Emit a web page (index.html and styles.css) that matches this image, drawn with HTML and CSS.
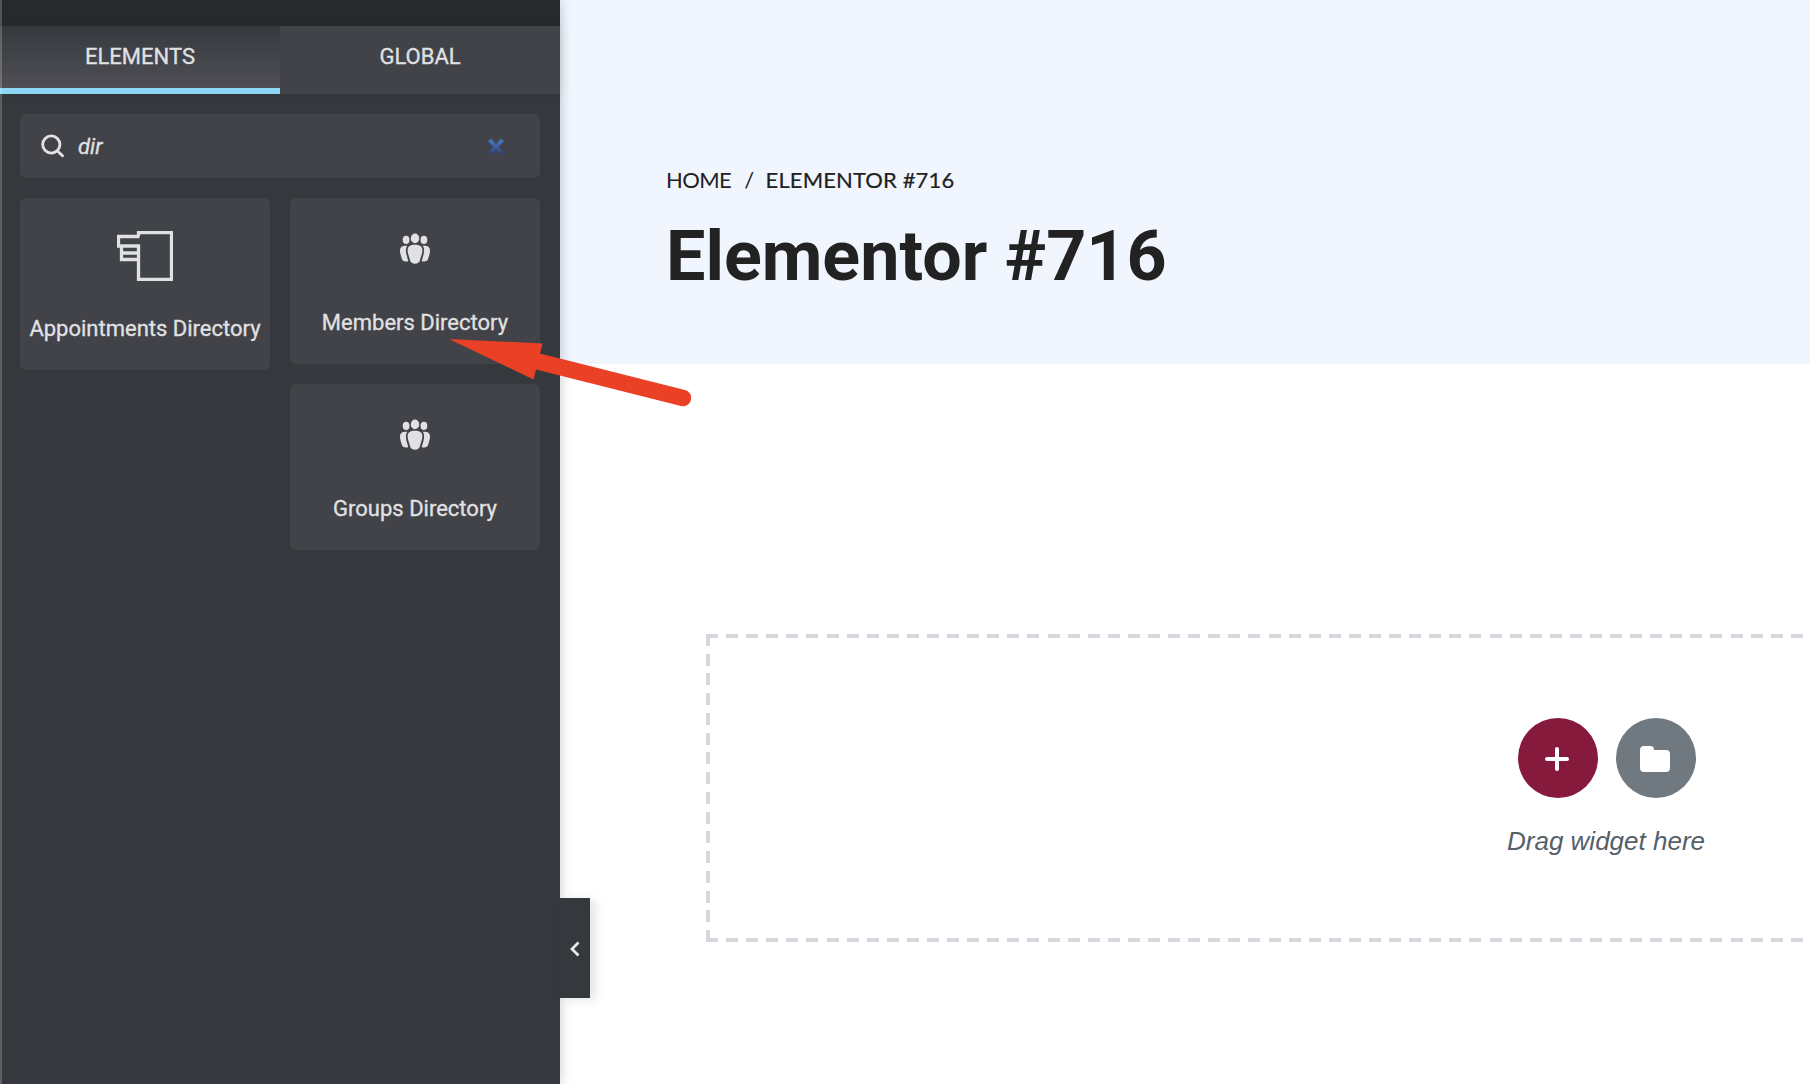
FILE: index.html
```html
<!DOCTYPE html>
<html lang="en">
<head>
<meta charset="utf-8">
<title>Elementor #716</title>
<link rel="stylesheet" href="styles.css">
</head>
<body>
<svg class="symbols" aria-hidden="true">
  <symbol id="people" viewBox="0 0 30 30">
    <ellipse cx="6.1" cy="6.4" rx="3.4" ry="4.1"/>
    <ellipse cx="23.9" cy="6.4" rx="3.4" ry="4.1"/>
    <ellipse cx="15" cy="4.9" rx="4.2" ry="4.9"/>
    <path d="M15 11.2c4.5 0 7.400 1.500 7.400 5.500 0 3.500-1.700 6.500-2.400 9.800C19.400 29 17.600 30.200 15 30.200s-4.400-1.200-5-3.700c-.7-3.300-2.400-6.300-2.400-9.800 0-4 2.900-5.500 7.400-5.500z"/>
    <path d="M7.300 12.200C3 11.900 0 13 0 17c0 3.200 1 5.200 1.700 7.700C2.500 27.300 4 28.400 8.300 27.700 7.500 24 5.900 20.800 5.900 17c0-2 .4-3.500 1.400-4.800z"/>
    <path d="M22.700 12.200C27 11.900 30 13 30 17c0 3.200-1 5.200-1.700 7.700-.8 2.600-2.300 3.700-6.600 3 .8-3.700 2.400-6.900 2.400-10.700 0-2-.4-3.500-1.400-4.800z"/>
  </symbol>
</svg>
<div class="editor">
  <aside class="panel">
    <div class="panel-header"></div>
    <nav class="tabs">
      <div class="tab active">ELEMENTS</div>
      <div class="tab">GLOBAL</div>
    </nav>
    <div class="search">
      <svg class="search-icon" viewBox="0 0 24 24"><circle cx="10.300" cy="10.500" r="8.600"/><path d="M16.500 17l5 4.800"/></svg>
      <span class="query">dir</span>
      <svg class="clear-icon" viewBox="0 0 16 16">
        <defs><linearGradient id="blue" x1="0" y1="0" x2="0" y2="16" gradientUnits="userSpaceOnUse"><stop offset="0" stop-color="#4a7ccc"/><stop offset="1" stop-color="#2d3f73"/></linearGradient></defs>
        <path d="M1.500 1l13 14M14.500 1l-13 14"/>
      </svg>
    </div>
    <div class="widgets">
      <div class="column">
        <div class="widget tall">
          <svg class="sign-icon" viewBox="0 0 56 50"><path d="M21.500 5V1.500h33v47h-33V15h-20V5.500h21M4.500 15v13.500h17M4.500 22h17"/></svg>
          <span>Appointments Directory</span>
        </div>
      </div>
      <div class="column">
        <div class="widget">
          <svg class="people-icon"><use href="#people"/></svg>
          <span>Members Directory</span>
        </div>
        <div class="widget">
          <svg class="people-icon"><use href="#people"/></svg>
          <span>Groups Directory</span>
        </div>
      </div>
    </div>
    <div class="toggle"><svg viewBox="0 0 10 16"><path d="M8.500 1.500L2 8l6.500 6.500"/></svg></div>
  </aside>
  <main class="preview">
    <header class="banner">
      <div class="crumbs"><span class="home">HOME</span><span class="slash">/</span><span class="current">ELEMENTOR #716</span></div>
      <h1>Elementor #716</h1>
    </header>
    <section class="dropzone">
      <div class="buttons">
        <div class="round add"><svg viewBox="0 0 24 24"><path d="M12 2v20M2 12h20"/></svg></div>
        <div class="round library"><svg viewBox="0 0 30 26"><path d="M4 0h6.500q3.500 0 3.500 4h12q4 0 4 4v14q0 4-4 4H4q-4 0-4-4V4q0-4 4-4z"/></svg></div>
      </div>
      <p>Drag widget here</p>
    </section>
  </main>
  <svg class="arrow" viewBox="0 0 242 68"><path d="M0 0l93.500 4.500-2.500 10L236 51a8 8 0 0 1-4 16L87 30.500l-2.500 10z"/></svg>
</div>
</body>
</html>
```
FILE: styles.css
```css
* { box-sizing: border-box; }
body { margin: 0; background: #fff; font-family: Roboto, sans-serif; }
svg { display: block; flex: none; }
.symbols { position: absolute; width: 0; height: 0; }
.editor { position: relative; display: flex; width: 100%; height: 1084px; overflow: hidden; }

.panel {
  position: relative;
  z-index: 1;
  flex: none;
  width: 560px;
  height: 1084px;
  background: #35383d;
  color: #e0e1e3;
  font-size: 22px;
  box-shadow: 0 0 12px rgba(0, 0, 0, .22);
}
.panel::after { content: ""; position: absolute; left: 0; top: 0; width: 2px; height: 100%; background: rgba(255, 255, 255, .2); }
.panel-header { height: 26px; background: #27292c; }
.tabs { display: flex; height: 68px; box-shadow: 0 2px 10px rgba(0, 0, 0, .08); }
.tab { flex: 1; height: 68px; line-height: 62px; text-align: center; -webkit-text-stroke: .3px #e0e1e3; background: #424348; }
.tab.active { background: linear-gradient(#35393d, #4f4f55); border-bottom: 6px solid #8dd7f4; }

.search { display: flex; align-items: center; height: 64px; margin: 20px 20px 0; padding: 0 36px 0 21px; border-radius: 6px; background: #424348; }
.search-icon { width: 24px; height: 24px; fill: none; stroke: #e0e1e3; stroke-width: 2.900; stroke-linecap: round; }
.query { flex: 1; margin-left: 13px; font-style: italic; -webkit-text-stroke: .3px #e0e1e3; }
.clear-icon { width: 16px; height: 16px; margin-top: 2px; fill: none; stroke: url(#blue); stroke-width: 3.800; }

.widgets { display: flex; gap: 20px; padding: 20px; }
.column { display: flex; flex-direction: column; flex: 1; gap: 20px; }
.widget { display: flex; flex-direction: column; align-items: center; justify-content: space-between; height: 166px; padding: 35px 0 28px; border-radius: 6px; background: #424348; line-height: 26px; white-space: nowrap; -webkit-text-stroke: .3px #e0e1e3; }
.widget svg { -webkit-text-stroke: 0; }
.widget.tall { height: 172px; padding-top: 33px; }
.sign-icon { width: 56px; height: 50px; fill: none; stroke: #e0e1e3; stroke-width: 3.300; }
.people-icon { width: 30px; height: 31px; fill: #e0e1e3; }

.toggle { position: absolute; left: 560px; top: 898px; display: flex; align-items: center; width: 30px; height: 100px; padding-left: 10px; background: #35383d; box-shadow: 6px 2px 10px rgba(0, 0, 0, .1); }
.toggle svg { width: 10px; height: 16px; margin-top: 1px; fill: none; stroke: #e8e9ea; stroke-width: 2.800; }

.preview { flex: 1; min-width: 0; }
.banner { height: 364px; padding: 166px 0 0 106px; background: #f0f5fe; color: #222; }
.crumbs { display: flex; font: 22px/28px Lato, sans-serif; }
.home { letter-spacing: -.6px; }
.slash { margin: 0 11.500px 0 13px; }
.current { letter-spacing: .12px; -webkit-text-stroke: .2px #222; }
h1 { margin: 21px 0 0; font-size: 70px; line-height: 82px; font-weight: 700; }

.dropzone {
  --dash-x: repeating-linear-gradient(90deg, #d5d9dd 0 12px, transparent 12px 20.090px);
  --dash-y: repeating-linear-gradient(#d5d9dd 0 12px, transparent 12px 19.733px);
  width: 1802px;
  height: 308px;
  margin: 270px 0 0 146px;
  padding-top: 84px;
  background: var(--dash-x) 0 0 / 100% 4px no-repeat, var(--dash-x) 0 100% / 100% 4px no-repeat, var(--dash-y) 0 0 / 4px 100% no-repeat;
}
.buttons { display: flex; justify-content: center; gap: 18px; }
.round { display: flex; align-items: center; justify-content: center; width: 80px; height: 80px; border-radius: 50%; }
.add { background: #851a3c; }
.add svg { width: 24px; height: 24px; margin: 2px 2px 0 0; stroke: #fff; stroke-width: 4; stroke-linecap: round; }
.library { background: #707980; }
.library svg { width: 30px; height: 26px; margin: 2px 2px 0 0; fill: #fff; }
.dropzone p { margin: 28px 2px 0 0; text-align: center; color: #556068; font: italic 26px/30px "Liberation Sans", Arial, sans-serif; }

.arrow { position: absolute; z-index: 2; left: 449px; top: 339px; width: 242px; height: 68px; fill: #ea4025; }
```
